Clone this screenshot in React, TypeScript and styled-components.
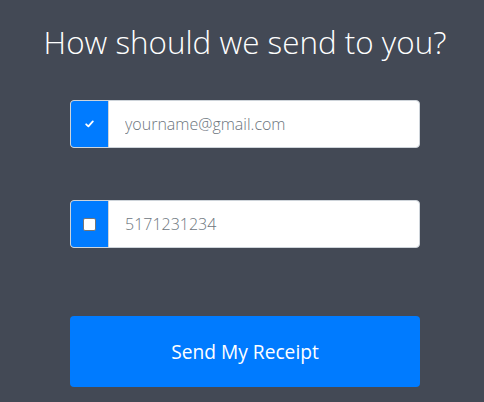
import React from 'react';
import styled, { createGlobalStyle } from 'styled-components';

const GlobalStyle = createGlobalStyle`
  html, body {
    margin: 0;
    padding: 0;
    background: #434955;
    font-family: 'Open Sans', 'Liberation Sans', sans-serif;
  }
`;

const Page = styled.div`
  min-height: 402px;
  padding: 20px 64px 0 70px;
  box-sizing: border-box;
  display: flex;
  flex-direction: column;
  align-items: center;
`;

const Title = styled.h1`
  margin: 0 0 36px;
  font-size: 31.4px;
  line-height: 44px;
  font-weight: 300;
  color: #ffffff;
  text-align: center;
  white-space: nowrap;
`;

const Form = styled.form`
  width: 350px;
  display: flex;
  flex-direction: column;
`;

const InputGroup = styled.div<{ $gap: number }>`
  display: flex;
  height: 48px;
  margin-bottom: ${p => p.$gap}px;
  border: 1px solid #ced4da;
  border-radius: 4px;
  overflow: hidden;
  box-sizing: border-box;
  background: #fff;
`;

const Addon = styled.label`
  width: 37px;
  flex: none;
  background: #007bff;
  border-right: 1px solid #ced4da;
  display: flex;
  align-items: center;
  justify-content: center;
  cursor: pointer;
`;

const Box = styled.span<{ $checked: boolean }>`
  width: 13px;
  height: 13px;
  box-sizing: border-box;
  border-radius: 2px;
  display: flex;
  align-items: center;
  justify-content: center;
  background: ${p => (p.$checked ? '#007bff' : '#fff')};
  border: 1px solid ${p => (p.$checked ? '#007bff' : '#767676')};
`;

const Field = styled.input`
  flex: 1;
  min-width: 0;
  border: none;
  outline: none;
  padding: 0 16px;
  font-family: inherit;
  font-size: 16px;
  font-weight: 300;
  color: #495057;
  background: transparent;

  &::placeholder {
    color: #6c757d;
    font-weight: 300;
  }
`;

const SendButton = styled.button`
  height: 71px;
  border: none;
  border-radius: 4px;
  background: #007bff;
  color: #fff;
  font-family: inherit;
  font-size: 19.2px;
  font-weight: 500;
  cursor: pointer;
`;

const Check = () => (
  <svg width="9" height="8" viewBox="0 0 9 8" fill="none">
    <path d="M1.2 4.3 L3.4 6.4 L7.8 1.4" stroke="#fff" strokeWidth="1.8" strokeLinecap="round" strokeLinejoin="round" />
  </svg>
);

const App: React.FC = () => {
  const [email, setEmail] = React.useState(true);
  const [phone, setPhone] = React.useState(false);

  return (
    <>
      <GlobalStyle />
      <Page>
        <Title>How should we send to you?</Title>
        <Form onSubmit={e => e.preventDefault()}>
          <InputGroup $gap={52}>
            <Addon onClick={() => setEmail(!email)}>
              <Box $checked={email}>{email && <Check />}</Box>
            </Addon>
            <Field type="email" placeholder="yourname@gmail.com" />
          </InputGroup>
          <InputGroup $gap={68}>
            <Addon onClick={() => setPhone(!phone)}>
              <Box $checked={phone}>{phone && <Check />}</Box>
            </Addon>
            <Field type="tel" placeholder="5171231234" />
          </InputGroup>
          <SendButton type="submit">Send My Receipt</SendButton>
        </Form>
      </Page>
    </>
  );
};

export default App;
